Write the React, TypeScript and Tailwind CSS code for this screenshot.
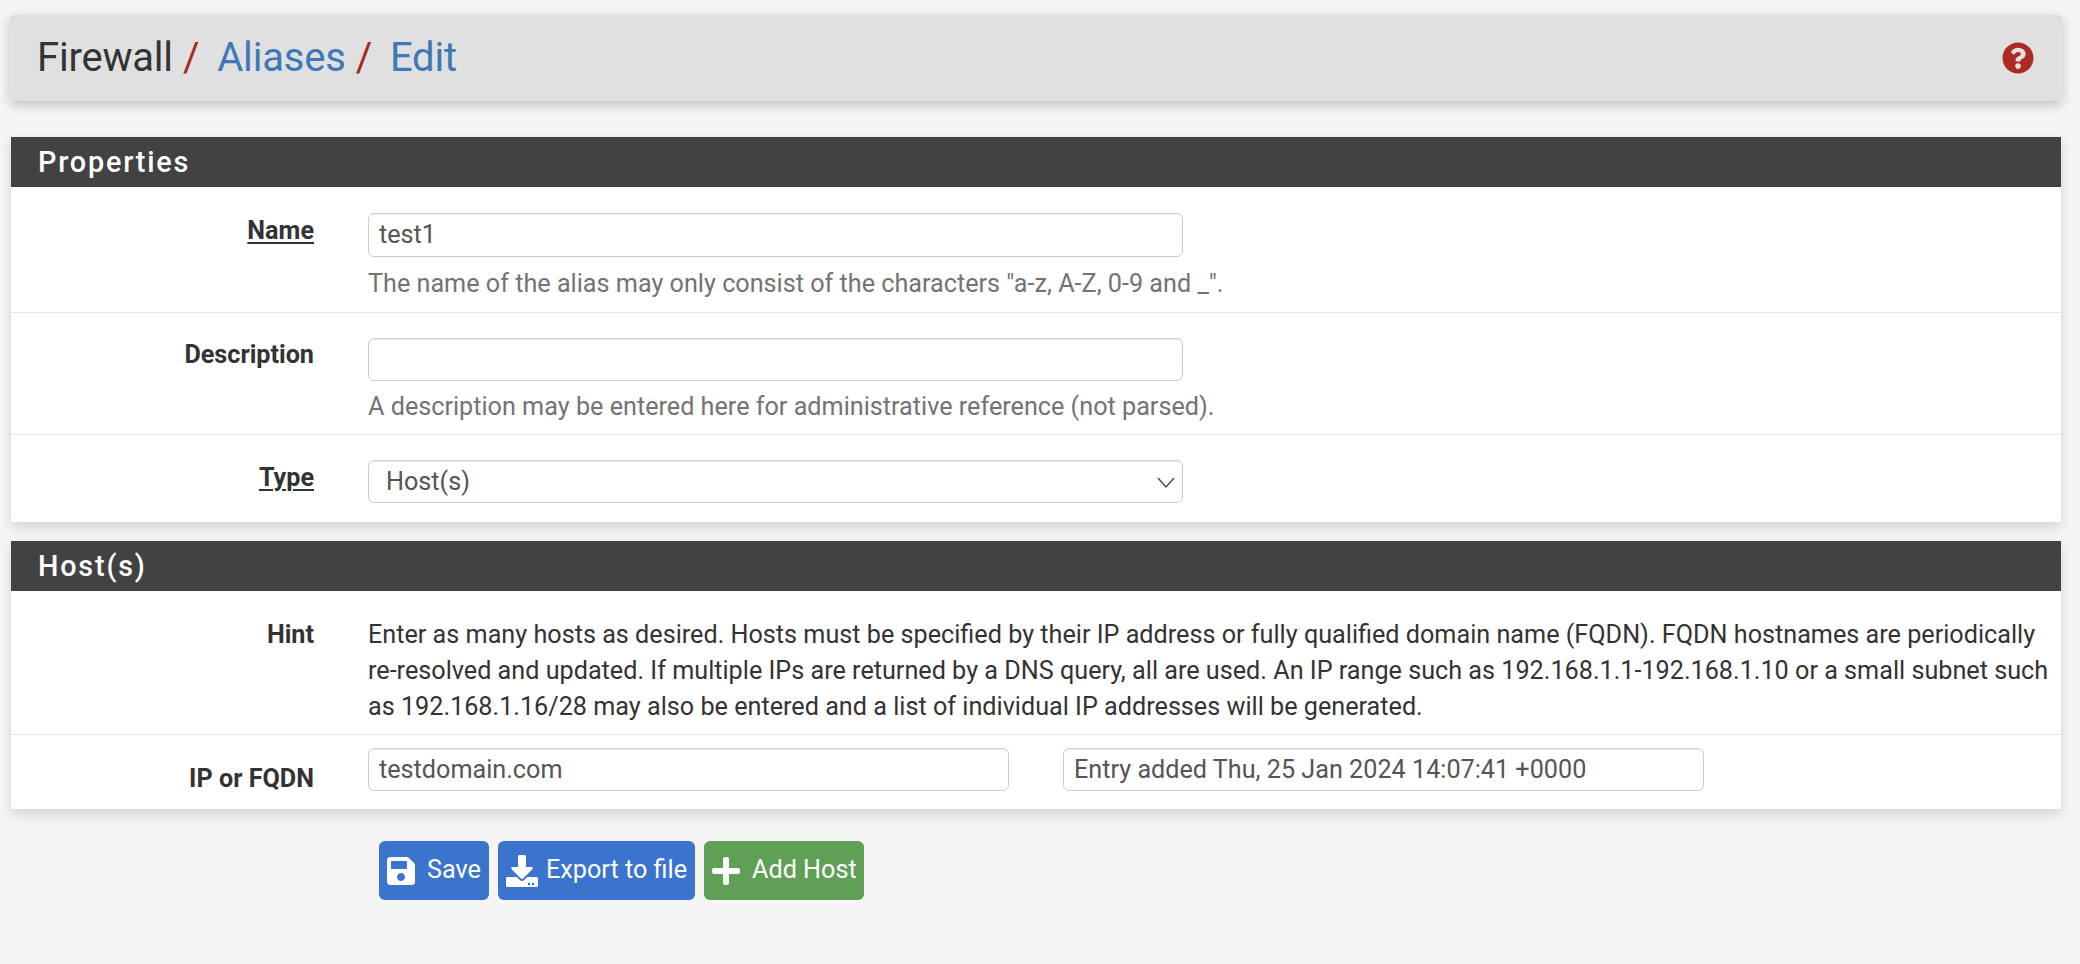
import { FaDownload, FaPlus, FaQuestionCircle, FaSave } from "react-icons/fa";
import type { ReactNode } from "react";

const inputClass =
  "block h-[43px] rounded-[6px] border border-[#cccccc] bg-white px-[10px] text-[25.2px] text-[#555555] shadow-[inset_0_1px_1px_rgba(0,0,0,0.075)] outline-none";

type RowProps = {
  label: string;
  underline?: boolean;
  labelClass: string;
  className: string;
  children: ReactNode;
};

const Row = ({ label, underline, labelClass, className, children }: RowProps) => (
  <div className={`flex border-b border-[#e6e6e6] last:border-b-0 ${className}`}>
    <div className={`w-[303px] shrink-0 text-right font-bold leading-[36px] text-[#333333] ${labelClass}`}>
      <span className={underline ? "underline decoration-2 underline-offset-[3px]" : ""}>{label}</span>
    </div>
    <div className="ml-[54px] min-w-0 flex-1">{children}</div>
  </div>
);

const Panel = ({ title, children }: { title: string; children: ReactNode }) => (
  <section className="mr-[19px] ml-[11px] bg-white shadow-[0_5px_12px_rgba(0,0,0,0.14)]">
    <h2 className="h-[50px] bg-[#424242] pl-[27px] text-[28.8px] leading-[50px] font-medium tracking-[1.8px] text-white">
      {title}
    </h2>
    {children}
  </section>
);

const App = () => {
  return (
    <div className="h-[964px] overflow-hidden bg-[#f5f5f5] pt-[15px] font-['Roboto',sans-serif] text-[25.2px] text-[#333333]">
      {/* Breadcrumb */}
      <div className="mr-[18px] ml-[10px] flex h-[86px] items-center justify-between rounded-[4px] bg-[#e0e0e0] pr-[28px] pl-[27px] shadow-[0_4px_12px_rgba(0,0,0,0.22)]">
        <h1 className="text-[40px] leading-none tracking-[-0.2px]">
          Firewall<span className="ml-[10px] text-[#a8281f]">/</span>
          <a className="ml-[18px] text-[#3f78b7]">Aliases</a>
          <span className="ml-[10px] text-[#a8281f]">/</span>
          <a className="ml-[18px] text-[#3f78b7]">Edit</a>
        </h1>
        <FaQuestionCircle className="size-[32px] text-[#ab2b22]" />
      </div>

      <div className="mt-[36px]">
        <Panel title="Properties">
          <Row label="Name" underline labelClass="pt-[26px]" className="h-[126px] pt-0">
            <div className="pt-[26px]">
              <input readOnly value="test1" className={`${inputClass} h-[44px] w-[815px] pb-[2px]`} />
              <p className="mt-[9px] leading-[36px] text-[#737373]">
                The name of the alias may only consist of the characters "a-z, A-Z, 0-9 and _".
              </p>
            </div>
          </Row>
          <Row label="Description" labelClass="pt-[24px]" className="h-[122px]">
            <div className="pt-[25px]">
              <input readOnly value="" className={`${inputClass} w-[815px]`} />
              <p className="mt-[8px] leading-[36px] text-[#737373]">
                A description may be entered here for administrative reference (not parsed).
              </p>
            </div>
          </Row>
          <Row label="Type" underline labelClass="pt-[25px]" className="h-[87px]">
            <div className="pt-[25px]">
              <div className={`${inputClass} flex w-[815px] items-center justify-between pr-[6px] pl-[17px]`}>
                <span>Host(s)</span>
                <svg viewBox="0 0 20 20" className="size-[20px] text-[#444444]" fill="none" stroke="currentColor" strokeWidth="1.4">
                  <path d="M2 6l8 9 8-9" />
                </svg>
              </div>
            </div>
          </Row>
        </Panel>

        <div className="mt-[19px]">
          <Panel title="Host(s)">
            <Row label="Hint" labelClass="pt-[26px]" className="h-[144px]">
              <p className="pt-[26px] pr-[10px] leading-[36px] text-[#333333]">
                Enter as many hosts as desired. Hosts must be specified by their IP address or fully qualified domain name (FQDN). FQDN hostnames are periodically re-resolved and updated. If multiple IPs are returned by a DNS query, all are used. An IP range such as 192.168.1.1-192.168.1.10 or a small subnet such as 192.168.1.16/28 may also be entered and a list of individual IP addresses will be generated.
              </p>
            </Row>
            <Row label="IP or FQDN" labelClass="pt-[26px]" className="h-[74px]">
              <div className="flex gap-[54px] pt-[13px]">
                <input readOnly value="testdomain.com" className={`${inputClass} w-[641px]`} />
                <input readOnly value="Entry added Thu, 25 Jan 2024 14:07:41 +0000" className={`${inputClass} w-[641px]`} />
              </div>
            </Row>
          </Panel>
        </div>
      </div>

      {/* Actions */}
      <div className="mt-[32px] ml-[379px] flex gap-[9px] text-[25.2px] text-white">
        <button className="flex h-[59px] w-[110px] items-center gap-[10px] rounded-[6px] bg-[#3a74cd] pl-[6px]">
          <FaSave className="size-[32px]" />
          <span className="-mt-[2px]">Save</span>
        </button>
        <button className="flex h-[59px] w-[197px] items-center gap-[8px] rounded-[6px] bg-[#3a74cd] pl-[8px]">
          <FaDownload className="size-[32px]" />
          <span className="-mt-[2px]">Export to file</span>
        </button>
        <button className="flex h-[59px] w-[160px] items-center gap-[10px] rounded-[6px] bg-[#5fa056] pl-[6px]">
          <FaPlus className="size-[32px]" />
          <span className="-mt-[2px]">Add Host</span>
        </button>
      </div>
    </div>
  );
};

export default App;
